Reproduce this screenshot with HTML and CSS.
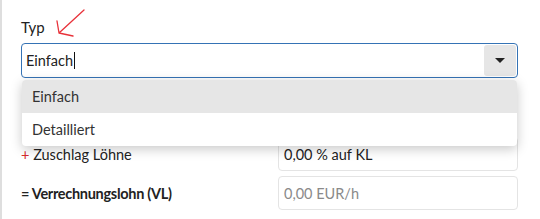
FILE: index.html
```html
<!DOCTYPE html>
<html lang="de">
<head>
  <meta charset="UTF-8" />
  <meta name="viewport" content="width=device-width, initial-scale=1.0" />
  <title>Typ</title>
  <link rel="stylesheet" href="styles.css">
</head>
<body>
  <div class="panel">
    <svg class="hint-arrow" width="40" height="36" viewBox="0 0 40 36">
      <path d="M29 3 L4 26 M2 14 L4 26 L18 29" fill="none" stroke="#e8323a" stroke-width="1.3" stroke-linecap="round" stroke-linejoin="round"/>
    </svg>

    <div class="field-label">Typ</div>
    <div class="combo">
      <div class="combo-value">Einfach<span class="caret"></span></div>
      <div class="combo-btn"><span class="triangle"></span></div>

      <ul class="menu">
        <li class="menu-item active">Einfach</li>
        <li class="menu-item">Detailliert</li>
      </ul>
    </div>

    <div class="rows">
      <div class="row-label"><span class="plus">+</span> Zuschlag Löhne</div>
      <div class="row-input">0,00 % auf KL</div>

      <div class="row-label bold">= Verrechnungslohn (VL)</div>
      <div class="row-input muted">0,00 EUR/h</div>
    </div>
  </div>
</body>
</html>
```

FILE: styles.css
```css
body {
  margin: 0;
  font-family: 'Lato', 'Noto Sans', sans-serif;
  font-size: 14.5px;
  color: #222;
  background: white;
}

.panel {
  position: relative;
  height: 219px;
  box-sizing: border-box;
  border-left: 2px solid #dedede;
  padding: 18px 22px 0 19px;
}

.hint-arrow {
  position: absolute;
  top: 7px;
  left: 53px;
}

.field-label {
  font-size: 15px;
  line-height: 18px;
  margin-bottom: 7px;
}

.combo {
  position: relative;
  display: flex;
  height: 35px;
  box-sizing: border-box;
  border: 1px solid #3573b5;
  border-radius: 4px;
}

.combo-value {
  flex: 1;
  display: flex;
  align-items: center;
  padding-left: 4px;
}

.caret {
  display: inline-block;
  width: 1px;
  height: 17px;
  margin-left: 1px;
  background: #111;
}

.combo-btn {
  width: 32px;
  margin: 1px;
  background: #e6e6e6;
  border-radius: 3px;
  display: flex;
  align-items: center;
  justify-content: center;
}

.triangle {
  width: 0;
  height: 0;
  border-left: 5px solid transparent;
  border-right: 5px solid transparent;
  border-top: 5px solid #222;
}

.menu {
  position: absolute;
  top: 36px;
  left: 0;
  right: 0;
  margin: 0;
  padding: 0;
  list-style: none;
  background: white;
  border-radius: 4px;
  box-shadow: 0 3px 12px rgba(0, 0, 0, 0.22);
  overflow: hidden;
  z-index: 5;
}

.menu-item {
  height: 33px;
  line-height: 33px;
  padding-left: 10px;
  color: #333;
}

.menu-item.active {
  background: #e6e6e6;
}

.rows {
  display: grid;
  grid-template-columns: 257px 240px;
  grid-auto-rows: 34px;
  row-gap: 5px;
  margin-top: 59px;
  align-items: center;
}

.row-label.bold {
  font-weight: bold;
  letter-spacing: -0.3px;
}

.plus {
  color: #d62b2b;
}

.row-input {
  height: 34px;
  box-sizing: border-box;
  border: 1px solid #e4e4e4;
  border-radius: 4px;
  padding-left: 5px;
  display: flex;
  align-items: center;
}

.row-input.muted {
  color: #8a8a8a;
}
```
